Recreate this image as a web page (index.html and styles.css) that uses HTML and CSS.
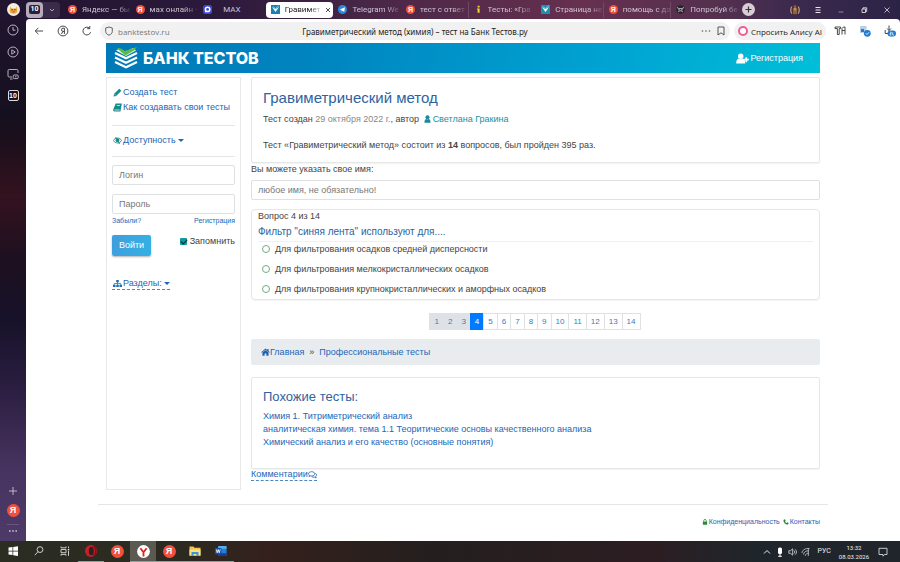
FILE: index.html
```html
<!DOCTYPE html>
<html lang="ru">
<head>
  <meta charset="UTF-8">
  <meta name="viewport" content="width=device-width, initial-scale=1.0">
  <title>Гравиметрический метод (химия) – тест на Банк Тестов.ру</title>
  <link rel="stylesheet" href="styles.css">
</head>
<body>
  <div class="tabbar">
    <div class="tabbar-left">
      <span class="avatar"><svg viewBox="0 0 12 12"><path d="M3 3l1 2h4l1-2 .6 4a3.6 3 0 0 1-7.2 0z" fill="#f2a93b"/><circle cx="4.7" cy="6.3" r=".7" fill="#543"/><circle cx="7.3" cy="6.3" r=".7" fill="#543"/><path d="M5 8.2h2" stroke="#b44" stroke-width=".8"/></svg></span>
      <div class="tab-group">
        <button class="tab-count"><span>10</span></button>
        <button class="tab-more" aria-label="Группы"><svg viewBox="0 0 8 8"><path d="M2 3l2 2 2-2" fill="none" stroke="#b3a9bd"/></svg></button>
      </div>
    </div>
    <nav class="tabs">
      <a class="tab" href="#"><span class="ya">Я</span><span class="tab-name">Яндекс — бы</span></a>
      <a class="tab" href="#"><span class="ya">Я</span><span class="tab-name">мах онлайн -</span></a>
      <a class="tab" href="#"><svg class="fav" viewBox="0 0 9 9"><rect width="9" height="9" rx="2.5" fill="#3d49d8"/><circle cx="4.6" cy="4.4" r="2.2" fill="none" stroke="#fff" stroke-width="1.5"/><path d="M2 5v2.6l1.6-.8" fill="#fff"/></svg><span class="tab-name tab-name-wide">MAX</span></a>
      <a class="tab active" href="#"><svg class="fav" viewBox="0 0 9 9"><rect width="9" height="9" fill="#1c7fb0"/><path d="M1 2l3.5 2L8 2 4.5 7z" fill="#fff"/><path d="M2 1.5l2.5 2L8 .5" fill="none" stroke="#7cc3d9"/></svg><span class="tab-name">Гравимет</span><button class="tab-close" aria-label="Закрыть"><svg viewBox="0 0 6 6"><path d="M1 1l4 4M5 1L1 5" stroke="#222" stroke-width=".8"/></svg></button></a>
      <a class="tab" href="#"><svg class="fav" viewBox="0 0 9 9"><circle cx="4.5" cy="4.5" r="4.5" fill="#2e86dc"/><path d="M1.8 4.5L7 2.3 6.2 7 4.6 5.8l-.8.8-.3-1.4z" fill="#fff"/></svg><span class="tab-name">Telegram We</span></a>
      <a class="tab" href="#"><span class="ya">Я</span><span class="tab-name">тест с ответ</span></a>
      <a class="tab line" href="#"><svg class="fav" viewBox="0 0 9 9"><path d="M3.6.8h2v1.6h-2zM3 3.4h2.6v4.4h-2V4.4H3z" fill="#f4d935"/></svg><span class="tab-name">Тесты: «Гра</span></a>
      <a class="tab" href="#"><svg class="fav" viewBox="0 0 9 9"><rect width="9" height="9" fill="#1b8fae"/><path d="M1 2l3.5 2L8 2 4.5 7z" fill="#fff"/><path d="M2 1.5l2.5 2L8 .5" fill="none" stroke="#7cc3d9"/></svg><span class="tab-name">Страница не</span></a>
      <a class="tab line" href="#"><span class="ya">Я</span><span class="tab-name">помощь с дз</span></a>
      <a class="tab line" href="#"><svg class="fav" viewBox="0 0 9 9"><circle cx="4.5" cy="4.5" r="4.3" fill="#29222f"/><path d="M1 2.5L3 3.6h3l2-1.1M2.2 6.8c1.6-1.4 3-1.4 4.6 0" stroke="#ddd" fill="none" stroke-width=".8"/><circle cx="3" cy="4.8" r=".6" fill="#fff"/><circle cx="6" cy="4.8" r=".6" fill="#fff"/></svg><span class="tab-name">Попробуй бе</span></a>
    </nav>
    <div class="tabbar-right">
      <button class="new-tab" aria-label="Новая вкладка"><svg viewBox="0 0 13 13"><path d="M6.5 3.5v6M3.5 6.5h6" stroke="#333" stroke-width="1.2"/></svg></button>
      <div class="window-buttons">
        <button aria-label="Профиль"><svg viewBox="0 0 12 12"><circle cx="6" cy="6" r="5.4" fill="#4b3038"/><path d="M2.6 2.6c-1 2-1 5 0 7M9.4 2.6c1 2 1 5 0 7" stroke="#cfb8a2" fill="none"/><path d="M6 1.5v5M5 4v6M7 4v6" stroke="#c68a53" stroke-width="1.1"/></svg></button>
        <button aria-label="Меню"><svg viewBox="0 0 12 12"><path d="M3.5 3.5h5M3.5 6h5M3.5 8.5h5" stroke="#fff" stroke-width=".9"/></svg></button>
        <button aria-label="Свернуть"><svg viewBox="0 0 12 12"><path d="M3.5 8h5" stroke="#a59aab" stroke-width=".8"/></svg></button>
        <button aria-label="Развернуть"><svg viewBox="0 0 12 12"><path d="M4 5h3.5v3.5H4zM5 5V3.8h3.7v3.7H7.5" fill="none" stroke="#ddd" stroke-width=".9"/></svg></button>
        <button aria-label="Закрыть окно"><svg viewBox="0 0 12 12"><path d="M3.5 3.5l5 5M8.5 3.5l-5 5" stroke="#ddd" stroke-width=".8"/></svg></button>
      </div>
    </div>
  </div>

  <div class="middle">
    <aside class="rail">
      <div class="rail-group">
        <button aria-label="История"><svg viewBox="0 0 12 12"><circle cx="6" cy="6" r="5" /><path d="M6 3v3.2h2.4"/></svg></button>
        <button aria-label="Видео"><svg viewBox="0 0 12 12"><circle cx="6" cy="6" r="5" /><path d="M4.8 3.8v4.4L8.2 6z"/></svg></button>
        <button aria-label="Экран"><svg viewBox="0 0 12 12"><path d="M5 9H2.2A1.2 1.2 0 0 1 1 7.8V2.7a1.2 1.2 0 0 1 1.2-1.2h7.6A1.2 1.2 0 0 1 11 2.7V5M3 11h2.5"/><rect x="6.2" y="7" width="5" height="3.6" rx="1"/><path d="M8 8.8h1.5"/></svg></button>
        <button class="rail-count"><span>10</span></button>
      </div>
      <div class="rail-group rail-bottom">
        <button aria-label="Добавить"><svg viewBox="0 0 12 12"><path d="M6 2v8M2 6h8"/></svg></button>
        <button aria-label="Яндекс"><span class="ya ya-big">Я</span></button>
        <hr>
        <button aria-label="Ещё"><svg viewBox="0 0 12 12"><path d="M2 6h1.6M5.2 6h1.6M8.4 6H10" stroke-width="1.6"/></svg></button>
      </div>
    </aside>

    <div class="browser">
      <div class="toolbar">
        <button class="tool" aria-label="Назад"><svg viewBox="0 0 12 12"><path d="M10 6H2.4M5.4 2.8L2.2 6l3.2 3.2"/></svg></button>
        <button class="tool" aria-label="Домой"><svg viewBox="0 0 12 12"><circle cx="6" cy="6" r="4.9"/><path d="M7.4 9V3.2H6a1.4 1.5 0 0 0 0 3.2h1.4M6 6.4L4.4 9"/></svg></button>
        <button class="tool" aria-label="Обновить"><svg viewBox="0 0 12 12"><path d="M9.6 7.2A3.9 3.9 0 1 1 8.4 3.1M8.8 1v2.7H6.2"/></svg></button>
        <div class="address">
          <span class="host"><svg viewBox="0 0 10 10"><path d="M5 1l3.3 1v3.4C8.3 7.4 6.7 8.6 5 9.2 3.3 8.6 1.7 7.4 1.7 5.4V2z" fill="none" stroke="#555" stroke-width=".9"/></svg>banktestov.ru</span>
          <span class="page-name">Гравиметрический метод (химия) – тест на Банк Тестов.ру</span>
          <span class="address-end">
            <svg viewBox="0 0 10 10"><path d="M.8 5h1.4M4.3 5h1.4M7.8 5h1.4" stroke="#777" stroke-width="1.3"/></svg>
            <svg viewBox="0 0 10 10"><path d="M2 1h6v8L5 6.8 2 9z" fill="none" stroke="#444" stroke-width=".9"/></svg>
          </span>
        </div>
        <button class="alice"><span class="alice-ring"></span>Спросить Алису AI</button>
        <div class="extensions">
          <button class="tool" aria-label="Расширения"><svg viewBox="0 0 12 12"><path d="M1 2h5.6v1.6H5.2V9.5H3.4V3.6H1zM8 3.5L9.5 2H11v7.5M8 3.5v6M8 5.5h3" stroke="#333"/></svg></button>
          <button class="tool" aria-label="Защита"><svg viewBox="0 0 12 12"><rect x="1" y="1" width="6.5" height="7" fill="#b9cfe6" stroke="none"/><rect x="2" y="4" width="3" height="3" fill="#3a74ba" stroke="none"/><circle cx="8.3" cy="8.3" r="3.4" fill="#1d7bd0" stroke="none"/><path d="M6.8 8.3l1.2 1.2 2-2.2" stroke="#fff"/></svg></button>
          <button class="tool" aria-label="Загрузки"><svg viewBox="0 0 12 12"><path d="M5 .5v5M3 3.5l2 2 2-2M1.2 5v3.5H4" /><rect x="3.5" y="5.5" width="8.5" height="6" rx="3" fill="#1d7bd0" stroke="none"/><path d="M6 7.2h1.2v1.4H6v1.4h1.4M8.7 7.2v2.8h1.3" stroke="#fff" stroke-width=".7"/></svg></button>
        </div>
      </div>

      <div class="page">
        <div class="container">
          <header class="header">
            <a class="logo" href="#">
              <svg viewBox="0 0 24 24"><g fill="none" stroke="#fff" stroke-width="2.2"><path d="M1 7l11 5.3L23 7"/><path d="M1 11.5l11 5.3 11-5.3"/><path d="M1 16l11 5.3L23 16"/></g><path d="M2 4.5l3-1.5 6 3 8-4 3 2.5-10 5.5z" fill="#e8f8ee"/><path d="M3 2l4 .5 4 2.5L23 1l-3 3.5-8.500 5L7 6z" fill="#5fb944"/></svg>
              <span>БАНК ТЕСТОВ</span>
            </a>
            <a class="register" href="#">
              <svg viewBox="0 0 13 11"><circle cx="4.7" cy="3.2" r="2.7" fill="#fff"/><path d="M.2 10.5C.2 7.3 1.5 5.6 3 5.6c1 .8 2.4.8 3.4 0 1.6 0 2.8 1.7 2.8 4.9z" fill="#fff"/><path d="M10.3 4.2v5M7.8 6.7h5" stroke="#fff" stroke-width="1.7"/></svg>Регистрация</a>
          </header>

          <div class="columns">
            <aside class="sidebar">
              <a class="side-link" href="#"><svg viewBox="0 0 10 10"><path d="M.6 9.5l.7-3L7 .8l2.3 2.3-5.7 5.7z" fill="#168b87"/><path d="M1.8 6.8l1.5 1.5" stroke="#fff" stroke-width=".6"/></svg>Создать тест</a>
              <a class="side-link" href="#"><svg viewBox="0 0 10 10"><path d="M3 .6h6.8L8.3 9.4H1.8C.3 9.4 0 8.2.4 7z" fill="#168b87"/><path d="M4.2 2.8h3.5M1.6 7.8h5.8" stroke="#fff" stroke-width=".8"/></svg>Как создавать свои тесты</a>
              <hr>
              <a class="side-link" href="#"><svg viewBox="0 0 10 10"><path d="M.4 5C2.5 1.4 7.5 1.4 9.6 5 7.5 8.6 2.5 8.6.4 5z" fill="none" stroke="#168b87"/><circle cx="5" cy="4.7" r="2.1" fill="#168b87"/><path d="M2.8 1.2l4.5 7.7" stroke="#168b87"/></svg>Доступность<span class="caret"></span></a>
              <hr class="tight">
              <form class="login">
                <input class="field" type="text" placeholder="Логин" aria-label="Логин">
                <input class="field" type="password" placeholder="Пароль" aria-label="Пароль">
                <div class="login-links"><a href="#">Забыли?</a><a href="#">Регистрация</a></div>
                <div class="login-row">
                  <button class="enter" type="button">Войти</button>
                  <label class="remember" for="remember"><input id="remember" type="checkbox" checked>Запомнить</label>
                </div>
              </form>
              <a class="side-link dashed" href="#"><svg viewBox="0 0 10 10"><path d="M3.6 1h2.8v2.7H3.6zM0 6.3h2.8V9H0zM3.6 6.3h2.8V9H3.6zM7.2 6.3H10V9H7.2z" fill="#1f6cae"/><path d="M5 3v3.5M1.4 6.5V5h7.2v1.5" fill="none" stroke="#1f6cae" stroke-width=".8"/></svg>Разделы: <span class="caret"></span></a>
            </aside>

            <main class="content">
              <section class="card about">
                <h1>Гравиметрический метод</h1>
                <p>Тест создан <span class="muted">29 октября 2022 г.</span>, автор <a class="author" href="#"><svg viewBox="0 0 8 9"><circle cx="4" cy="2.6" r="2.3" fill="#168b9b"/><path d="M.5 8.8C.5 6 1.5 4.6 2.6 4.6c.9.6 1.9.6 2.8 0 1.1 0 2.1 1.4 2.1 4.2z" fill="#168b9b"/></svg>Светлана Гракина</a></p>
                <p class="about-text">Тест «Гравиметрический метод» состоит из <b>14</b> вопросов, был пройден 395 раз.</p>
              </section>

              <label class="name-label" for="name">Вы можете указать свое имя:</label>
              <input class="field name-field" id="name" type="text" placeholder="любое имя, не обязательно!">

              <section class="card question">
                <p>Вопрос 4 из 14</p>
                <h2>Фильтр "синяя лента" используют для....</h2>
                <div class="answers">
                  <label><input type="radio" name="answer">Для фильтрования осадков средней дисперсности</label>
                  <label><input type="radio" name="answer">Для фильтрования мелкокристаллических осадков</label>
                  <label><input type="radio" name="answer">Для фильтрования крупнокристаллических и аморфных осадков</label>
                </div>
              </section>

              <nav class="pagination">
                <a class="done" href="#">1</a><a class="done" href="#">2</a><a class="done" href="#">3</a><a class="current" href="#">4</a><a href="#">5</a><a href="#">6</a><a href="#">7</a><a href="#">8</a><a href="#">9</a><a href="#">10</a><a href="#">11</a><a href="#">12</a><a href="#">13</a><a href="#">14</a>
              </nav>

              <nav class="breadcrumb">
                <a href="#"><svg viewBox="0 0 10 9"><path d="M5 .5L.2 4.7l.7.7L5 2l4.1 3.4.7-.7-1.400-1.300V1H7v1.200z" fill="#1a5fb4"/><path d="M1.600 5.200L5 2.500l3.400 2.700v3.600H6V6.200H4v2.600H1.600z" fill="#1a5fb4"/></svg>Главная</a>
                <span>»</span>
                <a href="#">Профессиональные тесты</a>
              </nav>

              <section class="card similar">
                <h3>Похожие тесты:</h3>
                <ul>
                  <li><a href="#">Химия 1. Титриметрический анализ</a></li>
                  <li><a href="#">аналитическая химия. тема 1.1 Теоритические основы качественного анализа</a></li>
                  <li><a href="#">Химический анализ и его качество (основные понятия)</a></li>
                </ul>
              </section>
              <a class="comments dashed" href="#">Комментарии<svg viewBox="0 0 10 9"><path d="M4 .8c2 0 3.500 1 3.500 2.400S6 5.600 4 5.600c-.5 0-.9 0-1.300-.2L1 6.200l.6-1.400C.9 4.400.5 3.800.5 3.200.5 1.800 2 .8 4 .8z" fill="none" stroke="#1a5fb4" stroke-width=".9"/><path d="M8.300 2.500c1.500 1 1.600 2.800.3 3.700l.6 1.600-1.900-.9c-1.200.3-2.500 0-3.300-.7" fill="none" stroke="#1a5fb4" stroke-width=".9"/></svg></a>
            </main>
          </div>
        </div>

        <footer class="footer">
          <a href="#"><svg viewBox="0 0 7 7"><path d="M1 3h5v3.700H1z" fill="#2a8a3c"/><path d="M2 3.200V2a1.500 1.500 0 0 1 3 0v1.200" fill="none" stroke="#2a8a3c" stroke-width=".9"/></svg>Конфиденциальность</a>
          <a href="#"><svg viewBox="0 0 7 7"><path d="M.8 1l1.500-.7.9 1.700-.8.800c.3.800 1 1.400 1.800 1.800l.8-.8 1.700.9L6 6.200C3.400 7.500-.5 3.400.8 1z" fill="#2a8a3c"/></svg>Контакты</a>
        </footer>
      </div>
    </div>
  </div>

  <div class="taskbar">
    <div class="apps">
      <button class="app" aria-label="Пуск"><svg viewBox="0 0 12 12"><path d="M1.500 2.600l4-.6v3.700h-4zM6.200 1.900L11 1.200v4.500H6.200zM1.500 6.400h4v3.700l-4-.6zM6.200 6.400H11v4.500l-4.800-.7z" fill="#fff"/></svg></button>
      <button class="app" aria-label="Поиск"><svg viewBox="0 0 12 12"><circle cx="7" cy="4.600" r="2.900" fill="none" stroke="#ddd" stroke-width=".9"/><path d="M5 6.700L1.800 10.200" stroke="#ddd" stroke-width=".9"/></svg></button>
      <button class="app" aria-label="Задачи"><svg viewBox="0 0 12 12"><path d="M2 1.500v1.300h5V1.500M2 4.500h5v3.200H2zM2 10.700V9.400h5v1.300M9.500 1.500v1.800M9.500 5.800v5" fill="none" stroke="#ddd" stroke-width=".9"/><path d="M8.800 4h1.500v1.300H8.800z" fill="#ddd"/></svg></button>
      <button class="app open" aria-label="Opera"><svg viewBox="0 0 12 12"><circle cx="6" cy="6" r="6" fill="#c5202c"/><ellipse cx="6.300" cy="6" rx="2.500" ry="4.200" fill="#30201c"/><path d="M8.500 1.200c3 2 3.400 7 0 9.600" fill="none" stroke="#7d1018" stroke-width="1.500"/></svg></button>
      <button class="app" aria-label="Яндекс"><span class="ya ya-big">Я</span></button>
      <button class="app open focused" aria-label="Яндекс Браузер"><svg viewBox="0 0 13 13"><circle cx="6.500" cy="6.500" r="6.400" fill="#fff"/><path d="M3.400 3.200l3.100 4 3.100-4M6.500 7v4.600" fill="none" stroke="#d9251d" stroke-width="1.800"/></svg></button>
      <button class="app open" aria-label="Яндекс Поиск"><span class="ya ya-big">Я</span></button>
      <button class="app open" aria-label="Проводник"><svg viewBox="0 0 12 12"><path d="M.5 1.500h4l1 1.200h6v8H.5z" fill="#f2c744"/><path d="M.5 4.500h11v6H.5z" fill="#fbe08a"/><path d="M2.500 7h7v4h-2V9h-3v2h-2z" fill="#3b96d2"/></svg></button>
      <button class="app open" aria-label="Word"><svg viewBox="0 0 13 12"><rect x="3.500" y=".5" width="9" height="11" rx="1" fill="#2b7cd3"/><path d="M3.500 1.500a1 1 0 0 1 1-1h7a1 1 0 0 1 1 1v2h-9z" fill="#53b0f0"/><path d="M3.500 8.500h9v2a1 1 0 0 1-1 1h-7a1 1 0 0 1-1-1z" fill="#123f91"/><rect y="2.700" width="7" height="6.800" rx=".8" fill="#1650ae"/><path d="M1.400 4.300l1 3.600 1.100-3.400 1.100 3.400 1-3.600" fill="none" stroke="#fff" stroke-width=".9"/></svg></button>
    </div>
    <div class="tray">
      <svg viewBox="0 0 10 10"><path d="M2 6.500l3-3 3 3" fill="none" stroke="#eee"/></svg>
      <svg viewBox="0 0 10 10"><rect x="3" y=".5" width="4" height="6.500" rx="1.500" fill="#fff"/><path d="M5 7v2.500M3.200 9.300h3.600" stroke="#fff"/></svg>
      <svg viewBox="0 0 10 10"><path d="M.8 3.700h1.700L4.700 1.800v6.400L2.500 6.300H.8zM6 3.500c.8.800.8 2.200 0 3M7.300 2.400c1.500 1.500 1.500 3.700 0 5.200" fill="none" stroke="#ddd" stroke-width=".8"/></svg>
      <svg viewBox="0 0 10 10"><path d="M1 6c0-2.500 3-5 7.500-4.500M2.500 7.500c0-2.200 2.500-4 5.500-3.700M4.300 8.800c0-1.600 1.500-2.700 3.500-2.500M7.300 1.500v7.500" fill="none" stroke="#ccc" stroke-width=".8"/></svg>
      <span class="lang">РУС</span>
      <span class="clock"><span>13:32</span><span>08.03.2026</span></span>
      <svg viewBox="0 0 10 10"><path d="M1 1.300h8v6.200H6.500L5 9.200V7.500H1z" fill="none" stroke="#eee" stroke-width=".8"/></svg>
    </div>
  </div>
</body>
</html>
```
FILE: styles.css
```css
* { box-sizing: border-box; }
body { margin: 0; height: 100vh; display: flex; flex-direction: column; font-family: "Liberation Sans", Arial, sans-serif; font-size: 9px; line-height: 13px; color: #444; background: #fff; overflow: hidden; }
h1, h2, h3, p, ul { margin: 0; padding: 0; font-weight: normal; }
h1, h2, h3 { color: #2d639e; }
ul { list-style: none; }
a { color: #1a66b8; text-decoration: none; }
button { border: 0; padding: 0; margin: 0; background: none; font: inherit; color: inherit; }
input { margin: 0; font: inherit; }
svg { display: block; flex: none; }
hr { border: 0; border-top: 1px solid #e6e6e6; margin: 0; width: 100%; }

/* вкладки */
.tabbar { display: flex; align-items: center; height: 19px; flex: none; font-family: Roboto, sans-serif; font-size: 8px; background: linear-gradient(90deg, #20142f, #2c1a3c 25%, #4a2747 42%, #67304f 65%, #54304f 80%, #3c2a4e 88%, #2b2346); }
.tabbar-left { width: 63px; display: flex; align-items: center; flex: none; }
.avatar { width: 26px; display: flex; justify-content: center; }
.avatar svg { width: 13px; height: 13px; border-radius: 50%; background: #f3efe6; }
.tab-group { display: flex; align-items: center; background: #3a2b48; border-radius: 4px; height: 16px; width: 34px; }
.tab-count { width: 17px; height: 16px; border-radius: 4px; background: #b5abbc; display: flex; align-items: center; justify-content: center; }
.tab-count span { background: #2a2138; color: #fff; font-size: 7px; line-height: 9px; width: 11px; border-radius: 2px; text-align: center; font-weight: bold; }
.tab-more { flex: 1; display: flex; justify-content: center; }
.tab-more svg { width: 8px; height: 8px; }
.tabs { flex: 1; display: flex; min-width: 0; }
.tab { flex: 1; min-width: 0; height: 16px; padding: 0 5px; display: flex; align-items: center; gap: 5px; color: #cfc4d2; }
.tab.active { background: #fff; color: #222; border-radius: 4px; }
.tab.line { box-shadow: -1px 0 #6f4a66; }
.tab-name { flex: 1; white-space: nowrap; mask-image: linear-gradient(90deg, #000 70%, rgba(0,0,0,0.2)); }
.tab-name-wide { mask-image: none; padding-left: 6px; }
.fav { width: 9px; height: 9px; }
.tab-close svg { width: 6px; height: 6px; }
.ya { flex: none; width: 9px; height: 9px; border-radius: 50%; background: #f0503c; color: #fff; font: bold 7px/9px "Liberation Sans", Arial, sans-serif; text-align: center; }
.ya-big { display: block; width: 13px; height: 13px; font-size: 9px; line-height: 13px; }
.tabbar-right { width: 161px; flex: none; display: flex; align-items: center; justify-content: space-between; padding: 0 7px 0 3px; }
.new-tab { width: 13px; height: 13px; border-radius: 50%; background: #d8ccd6; }
.window-buttons { display: flex; gap: 11px; }
.window-buttons svg { width: 12px; height: 12px; }

/* боковая панель браузера */
.middle { flex: 1; display: flex; min-height: 0; background: #2b2346; }
.rail { width: 26px; flex: none; display: flex; flex-direction: column; justify-content: space-between; background: linear-gradient(#20142e, #15101f 18%, #1c0f1c 23%, #34121f 34%, #1d1020 46%, #17122a 58%, #2a1d40 70%, #47335f 86%, #4d3a68); }
.rail-group { display: flex; flex-direction: column; align-items: center; gap: 10px; padding-top: 5px; }
.rail-group svg { width: 12px; height: 12px; fill: none; stroke: #c9c2cf; stroke-width: .9; }
.rail-count span { display: block; width: 11px; border: 1px solid #ddd; border-radius: 2px; color: #fff; font-size: 7px; line-height: 9px; font-weight: bold; }
.rail-bottom { gap: 7px; padding-bottom: 4px; }
.rail-bottom hr { width: 12px; border-color: #6a5580; }
.rail-bottom hr + button { margin-top: -7px; }

.browser { flex: 1; min-width: 0; display: flex; flex-direction: column; background: #fff; border-radius: 4px 4px 0 0; }
.toolbar { height: 24px; flex: none; display: flex; align-items: center; padding: 0 4px 0 7px; gap: 12px; font-family: "Open Sans", sans-serif; font-size: 8px; color: #222; }
.tool svg { width: 12px; height: 12px; fill: none; stroke: #333; stroke-width: .9; }
.address { flex: 1; min-width: 0; height: 18px; margin: 0 -8px 0 -5px; border-radius: 9px; background: #f1f1f1; display: grid; grid-template-columns: 1fr auto 1fr; align-items: center; padding: 0 4px; }
.host { display: flex; align-items: center; gap: 4px; color: #777; }
.host svg { width: 10px; height: 10px; }
.page-name { white-space: nowrap; font-family: "Noto Sans", sans-serif; }
.address-end { display: flex; gap: 5px; justify-content: flex-end; }
.address-end svg { width: 10px; height: 10px; }
.alice { display: flex; align-items: center; gap: 3px; height: 18px; margin-right: -4px; padding: 0 4px; border-radius: 9px; background: #f1f1f1; white-space: nowrap; }
.alice-ring { width: 10px; height: 10px; border: 2px solid #ee5c94; border-radius: 50%; background: #fff; }
.extensions { display: flex; gap: 13px; }

/* сайт */
.page { flex: 1; min-height: 0; overflow: hidden; }
.container { max-width: 730px; margin: 0 auto; padding: 0 8px; }
.header { height: 30px; display: flex; align-items: center; justify-content: space-between; padding: 0 17px 0 8px; background: linear-gradient(100deg, #0079b8, #0085c0 30%, #00a3d2 70%, #00bfd8); }
.logo { display: flex; align-items: center; gap: 5px; color: #fff; font: 800 16px/20px Inter, sans-serif; }
.logo svg { width: 24px; height: 24px; }
.register { display: flex; align-items: center; gap: 1px; color: #fff; }
.register svg { width: 13px; height: 11px; }
.columns { display: flex; gap: 10px; margin-top: 4px; align-items: stretch; }
.sidebar { width: 135px; flex: none; border: 1px solid #e8e8e8; padding: 7px 5px 0; }
.side-link { display: flex; align-items: center; gap: 1px; line-height: 15px; white-space: nowrap; }
.side-link svg { width: 9px; height: 9px; margin-left: 1px; }
.caret { border: 3px solid transparent; border-top-color: #1a66b8; border-bottom: 0; margin-left: 1px; }
.sidebar hr { margin: 10px 0 7px; }
.sidebar .tight { margin-top: 8px; }
.login { padding-top: 1px; }
.field { display: block; width: 100%; height: 20px; border: 1px solid #dde1e4; border-radius: 2px; padding: 0 6px; color: #444; background: #fff; outline: 0; }
.field::placeholder { color: #777; opacity: 1; }
.login .field + .field { margin-top: 9px; }
.login-links { display: flex; justify-content: space-between; font-size: 7px; line-height: 14px; }
.login-row { display: flex; justify-content: space-between; align-items: flex-start; margin-top: 7px; }
.enter { width: 39px; height: 21px; border-radius: 2px; background: linear-gradient(90deg, #3f9fdc, #35b0e4); color: #fff; box-shadow: 0 1px 2px rgba(0,0,0,0.3); }
.remember { display: flex; align-items: center; gap: 3px; }
.remember input { appearance: none; width: 7px; height: 7px; background: #0f9a9c; border-radius: 1px; }
.remember input:checked::before { content: ""; display: block; width: 5px; height: 3px; margin: 1px; border: solid #033; border-width: 0 0 1px 1px; transform: rotate(-45deg); }
.dashed { border-bottom: 1px dashed #4a86c0; }
.side-link.dashed { display: inline-flex; margin-top: 22px; line-height: 11px; }

.content { flex: 1; min-width: 0; }
.card { border: 1px solid #e4e8e8; border-radius: 2px; box-shadow: 0 1px 1px rgba(0,0,0,0.05); }
.about { padding: 10px 11px 10px; }
h1 { font-size: 15px; line-height: 20px; }
.about p { margin-top: 5px; }
.about .about-text { margin-top: 13px; }
.muted { color: #888; }
.author { color: #17919f; }
.author svg { display: inline-block; width: 7px; height: 8px; margin: 0 2px; vertical-align: -1px; }
.name-label { display: block; }
.name-field { margin-top: 4px; }
.question { margin-top: 9px; padding: 0 6px 3px; border-radius: 4px; }
.question h2 { font-size: 10px; line-height: 18px; border-bottom: 1px solid #f0f0f0; }
.answers { padding-left: 4px; }
.answers label { display: flex; align-items: center; gap: 5px; height: 14px; }
.answers label + label { margin-top: 6px; }
.answers input { appearance: none; width: 8px; height: 8px; border: 1px solid #6fae84; border-radius: 50%; background: #fff; }
.pagination { display: flex; justify-content: center; margin-top: 13px; font-size: 8px; line-height: 15px; }
.pagination a { padding: 0 4px; border: 1px solid #dee2e6; margin-left: -1px; color: #2f7fc4; }
.pagination .done { background: #dee2e6; }
.pagination .current { background: #007bff; border-color: #007bff; color: #fff; }
.breadcrumb { display: flex; align-items: center; gap: 5px; margin-top: 9px; padding: 0 10px; height: 26px; background: #e9ecef; border-radius: 2px; }
.breadcrumb a { display: flex; align-items: center; }
.breadcrumb svg { width: 9px; height: 8px; }
.similar { margin-top: 12px; padding: 9px 11px 19px; }
h3 { font-size: 13px; line-height: 20px; }
.similar ul { margin-top: 3px; }
.comments { display: inline-flex; align-items: center; line-height: 11px; vertical-align: top; }
.comments svg { width: 9px; height: 8px; }
.content::after { content: ""; display: block; height: 8px; }
.footer { max-width: 730px; margin: 14px auto 0; border-top: 1px solid #e6e6e6; padding: 11px 8px 0; display: flex; justify-content: flex-end; gap: 3px; font-size: 7px; line-height: 11px; }
.footer a { display: flex; align-items: center; gap: 1px; }
.footer svg { width: 6px; height: 6px; }

/* панель задач */
.taskbar { height: 21px; flex: none; display: flex; justify-content: space-between; font-family: Roboto, sans-serif; font-size: 7px; color: #eee; background: linear-gradient(90deg, #2b2d22, #2c2a20 20%, #34201c 30%, #241f1e 48%, #2c1d22 72%, #1f262b 84%, #20252b); }
.apps { display: flex; }
.app { width: 26px; display: flex; align-items: center; justify-content: center; border-bottom: 1px solid transparent; }
.app svg { width: 12px; height: 12px; }
.app.open { border-bottom-color: #7fa79c; }
.app.focused { background: #5b5a52; }
.app.focused svg { width: 13px; height: 13px; }
.tray { display: flex; align-items: center; gap: 3px; padding-right: 12px; }
.tray svg { width: 10px; height: 10px; }
.lang { margin: 0 2px 0 4px; }
.clock { display: flex; flex-direction: column; align-items: center; font-size: 6px; line-height: 9px; margin: 0 6px 0 3px; }
```
